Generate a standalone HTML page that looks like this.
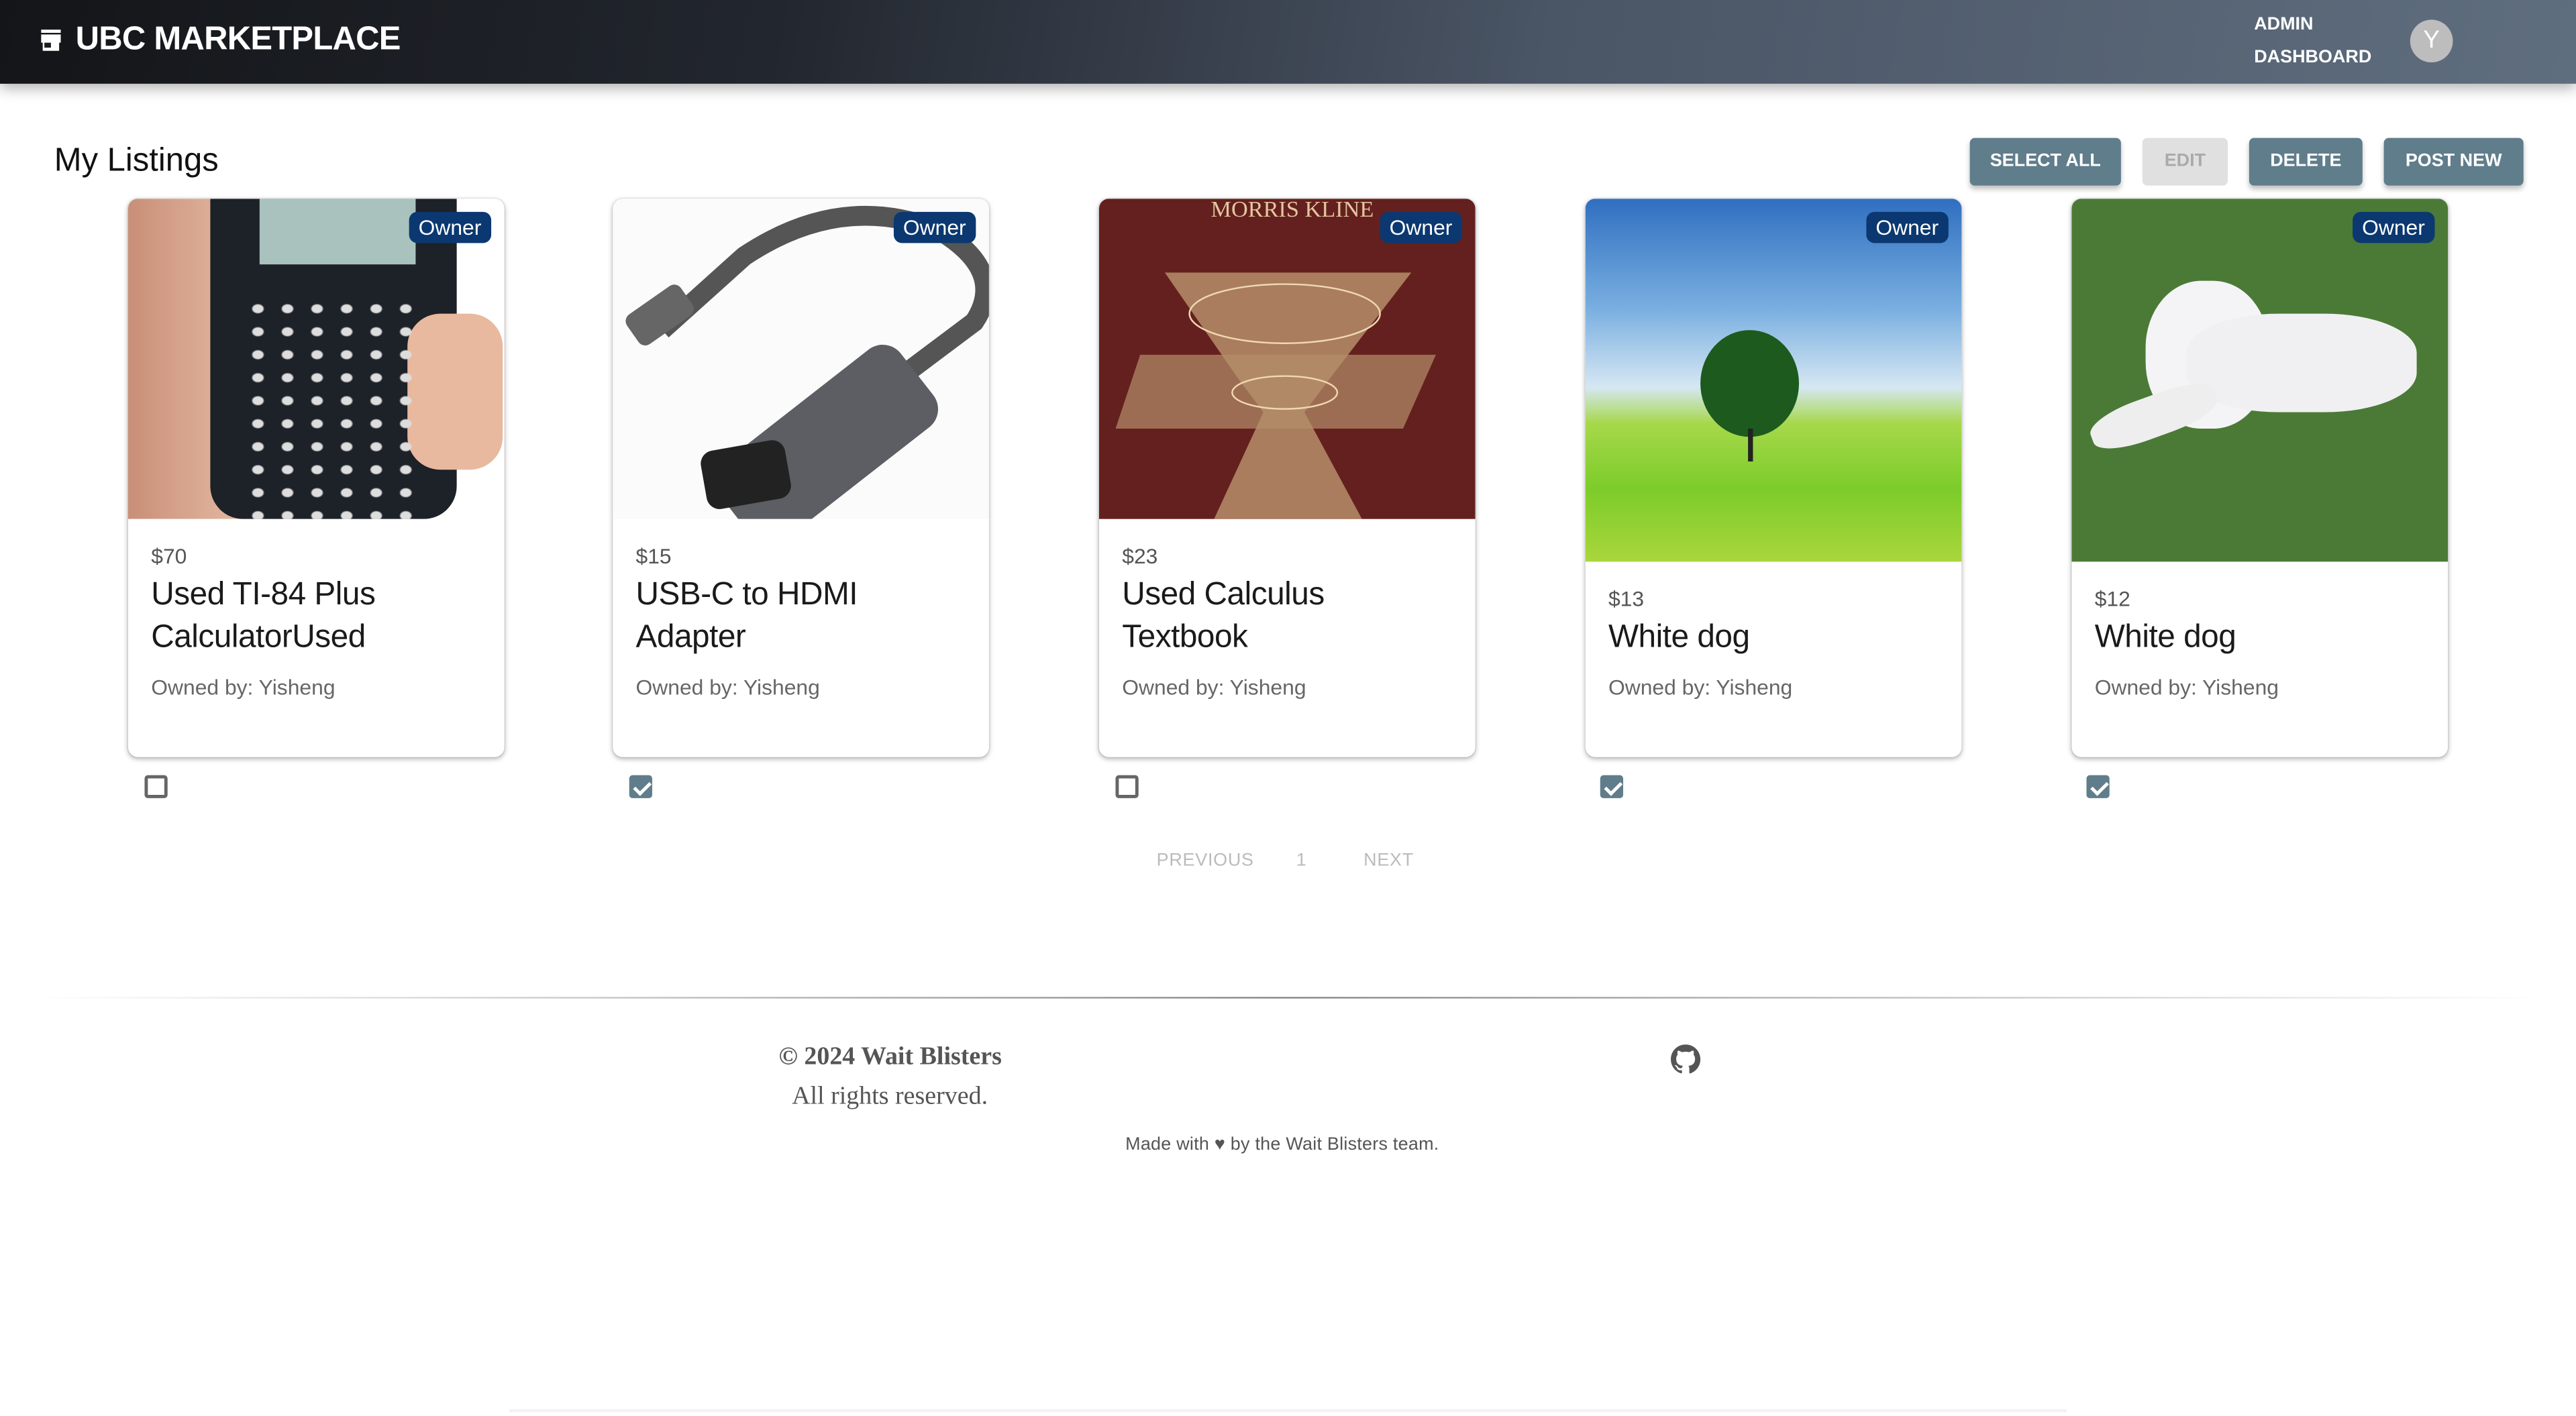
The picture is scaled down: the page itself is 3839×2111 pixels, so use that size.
<!DOCTYPE html>
<html><head><meta charset="utf-8"><style>
*{box-sizing:border-box;margin:0;padding:0}
html,body{width:3839px;height:2109px;overflow:hidden;background:#fff}
#w{position:absolute;left:0;top:0;width:1568px;height:862px;transform:scale(2.4484);transform-origin:0 0;font-family:"Liberation Sans",sans-serif}
.hdr{position:absolute;left:0;top:0;width:1568px;height:51px;background:linear-gradient(100deg,#131518 0%,#22262e 30%,#4a5565 60%,#5f6e7f 100%);box-shadow:0 3px 8px rgba(0,0,0,.3)}
.logo{position:absolute;left:46px;top:13px;color:#fff;font-weight:bold;font-size:20px;letter-spacing:-.3px}
.adm{position:absolute;left:1372px;top:5px;color:#fff;font-size:11px;font-weight:bold;line-height:20px;letter-spacing:0}
.av{position:absolute;left:1467px;top:12px;width:26px;height:26px;border-radius:50%;background:#bdbdbd;color:#fff;font-size:15px;text-align:center;line-height:26px}
h1{position:absolute;left:33px;top:87px;font-size:20px;font-weight:normal;color:#111}
.btn{position:absolute;top:84px;height:29px;border-radius:3px;background:#607d8b;color:#fff;font-size:11px;font-weight:bold;text-align:center;line-height:29px;letter-spacing:0;box-shadow:0 2px 3px rgba(0,0,0,.25)}
.card{position:absolute;top:121px;width:229px;height:340px;border-radius:6px;background:#fff;box-shadow:0 1px 3px rgba(0,0,0,.3),0 0 1px rgba(0,0,0,.15);overflow:hidden}
.img{position:absolute;left:0;top:0;width:229px;overflow:hidden}
.own{position:absolute;right:8px;top:8px;background:#0b3870;color:#fff;font-size:13px;padding:1px 6px;border-radius:5px;line-height:17px}
.txt{position:absolute;left:14px;right:10px;white-space:nowrap}
.pr{font-size:13px;color:#555}
.tt{font-size:19.5px;color:#1a1a1a;line-height:26px;margin-top:3px;letter-spacing:-.2px}
.ob{font-size:13px;color:#666;margin-top:10px}
.cb{position:absolute;top:472px;width:14px;height:14px;border:2px solid #666;border-radius:2px}
.cb.on{background:#607d8b;border-color:#607d8b}
.cb.on:after{content:"";position:absolute;left:3px;top:0px;width:4px;height:8px;border:solid #fff;border-width:0 2px 2px 0;transform:rotate(45deg)}
.pg{position:absolute;top:518px;font-size:11px;color:#bbb;letter-spacing:.3px}
</style></head><body><div id="w">
<div class="hdr">
<svg style="position:absolute;left:25px;top:18px" width="12" height="13" viewBox="0 0 12 13"><rect x="0" y="0" width="12" height="2" fill="#fff"/><path d="M0 3h12v5h-1v5H1V8H0z" fill="#fff"/><rect x="2" y="8" width="4" height="3" fill="#1a1c20"/></svg>
<div class="logo">UBC MARKETPLACE</div>
<div class="adm">ADMIN<br>DASHBOARD</div>
<div class="av">Y</div>
</div>
<h1>My Listings</h1>
<div class="btn" style="left:1199px;width:92px">SELECT ALL</div>
<div class="btn" style="left:1304px;width:52px;background:#e0e0e0;color:#aaa;box-shadow:none">EDIT</div>
<div class="btn" style="left:1369px;width:69px">DELETE</div>
<div class="btn" style="left:1451px;width:85px">POST NEW</div>

<div class="card" style="left:78px"><div class="img" style="height:195px;background:#fff"><div style="position:absolute;left:0;top:0;width:70px;height:195px;background:linear-gradient(90deg,#c98f78,#e4b9a2)"></div><div style="position:absolute;left:50px;top:0;width:150px;height:195px;background:#1d2128;border-radius:0 0 20px 20px"></div><div style="position:absolute;left:80px;top:0;width:95px;height:40px;background:#a9c2bd"></div><div style="position:absolute;left:170px;top:70px;width:58px;height:95px;border-radius:20px;background:#e8b99f"></div><div style="position:absolute;left:70px;top:60px;width:110px;height:135px;background:radial-gradient(ellipse,#ddd 3px,transparent 4px) 0 0/18px 14px"></div></div><div class="own">Owner</div>
<div class="txt" style="top:210px"><div class="pr">$70</div><div class="tt">Used TI-84 Plus<br>CalculatorUsed</div><div class="ob">Owned by: Yisheng</div></div></div>

<div class="card" style="left:373px"><div class="img" style="height:195px;background:#fbfbfb"><svg width="229" height="195"><path d="M30 80 L80 35 Q140 -5 200 20 Q240 45 220 75 L180 105" stroke="#555" stroke-width="12" fill="none"/><rect x="8" y="60" width="40" height="22" rx="5" fill="#666" transform="rotate(-35 28 70)"/><rect x="60" y="120" width="140" height="60" rx="14" fill="#5d5e63" transform="rotate(-38 130 150)"/><rect x="55" y="150" width="52" height="36" rx="8" fill="#222" transform="rotate(-10 81 168)"/></svg></div><div class="own">Owner</div>
<div class="txt" style="top:210px"><div class="pr">$15</div><div class="tt">USB-C to HDMI<br>Adapter</div><div class="ob">Owned by: Yisheng</div></div></div>

<div class="card" style="left:669px"><div class="img" style="height:195px;background:#64201e"><div style="position:absolute;left:68px;top:0;font-family:'Liberation Serif',serif;font-size:14px;color:#e2c7a0">MORRIS KLINE</div><svg width="229" height="195"><path d="M40 45 L190 45 L140 110 L125 130 L160 195 L70 195 L100 130 L85 110 Z" fill="#b58e6a" opacity=".85"/><path d="M25 95 L205 95 L185 140 L10 140Z" fill="#b58e6a" opacity=".7"/><ellipse cx="113" cy="70" rx="58" ry="18" fill="none" stroke="#f0d8b0"/><ellipse cx="113" cy="118" rx="32" ry="10" fill="none" stroke="#f0d8b0"/></svg></div><div class="own">Owner</div>
<div class="txt" style="top:210px"><div class="pr">$23</div><div class="tt">Used Calculus<br>Textbook</div><div class="ob">Owned by: Yisheng</div></div></div>

<div class="card" style="left:965px"><div class="img" style="height:221px;background:linear-gradient(180deg,#2f6fc0 0%,#78aee0 30%,#d6e7f3 52%,#a6d84a 62%,#7ccc2a 80%,#a9d63c 100%)"><div style="position:absolute;left:70px;top:80px;width:60px;height:65px;border-radius:50%;background:#1d5a1e"></div><div style="position:absolute;left:99px;top:140px;width:3px;height:20px;background:#222"></div></div><div class="own">Owner</div>
<div class="txt" style="top:236px"><div class="pr">$13</div><div class="tt">White dog</div><div class="ob">Owned by: Yisheng</div></div></div>

<div class="card" style="left:1261px"><div class="img" style="height:221px;background:#4b7a36"><div style="position:absolute;left:45px;top:50px;width:75px;height:90px;border-radius:45%;background:#f4f4f6"></div><div style="position:absolute;left:70px;top:70px;width:140px;height:60px;border-radius:40%;background:#f0f0f2"></div><div style="position:absolute;left:10px;top:120px;width:80px;height:25px;border-radius:40%;background:#eee;transform:rotate(-20deg)"></div></div><div class="own">Owner</div>
<div class="txt" style="top:236px"><div class="pr">$12</div><div class="tt">White dog</div><div class="ob">Owned by: Yisheng</div></div></div>

<div class="cb" style="left:88px"></div>
<div class="cb on" style="left:383px"></div>
<div class="cb" style="left:679px"></div>
<div class="cb on" style="left:974px"></div>
<div class="cb on" style="left:1270px"></div>

<div class="pg" style="left:704px">PREVIOUS</div>
<div class="pg" style="left:789px">1</div>
<div class="pg" style="left:830px">NEXT</div>

<div style="position:absolute;left:20px;top:607px;width:1528px;height:1px;background:linear-gradient(90deg,transparent,#888 50%,transparent)"></div>
<div style="position:absolute;left:474px;top:635px;font-family:'Liberation Serif',serif;font-size:15.5px;font-weight:bold;color:#555">© 2024 Wait Blisters</div>
<div style="position:absolute;left:482px;top:659px;font-family:'Liberation Serif',serif;font-size:15.5px;color:#555">All rights reserved.</div>
<svg style="position:absolute;left:1017px;top:636px" width="18" height="18" viewBox="0 0 16 16"><path fill="#555" d="M8 0C3.58 0 0 3.580 0 8c0 3.54 2.29 6.530 5.47 7.59.4.07.55-.17.55-.38v-1.33c-2.23.48-2.7-1.07-2.7-1.07-.36-.92-.89-1.170-.89-1.17-.73-.5.06-.49.06-.49.8.06 1.23.83 1.23.83.71 1.22 1.87.87 2.33.66.07-.52.28-.87.5-1.07-1.78-.2-3.64-.89-3.64-3.95 0-.87.31-1.59.82-2.15-.08-.2-.36-1.02.08-2.12 0 0 .67-.21 2.2.82a7.6 7.6 0 014 0c1.53-1.04 2.2-.82 2.2-.82.44 1.1.16 1.92.08 2.12.51.56.82 1.27.82 2.15 0 3.07-1.87 3.75-3.65 3.95.29.25.54.73.54 1.48v2.2c0 .21.15.46.55.38A8 8 0 0016 8c0-4.42-3.58-8-8-8z"/></svg>
<div style="position:absolute;left:685px;top:691px;font-size:11px;color:#555;letter-spacing:.1px">Made with ♥ by the Wait Blisters team.</div>
<div style="position:absolute;left:310px;top:858px;width:948px;height:2px;background:#f3f3f3"></div>
</div></body></html>
